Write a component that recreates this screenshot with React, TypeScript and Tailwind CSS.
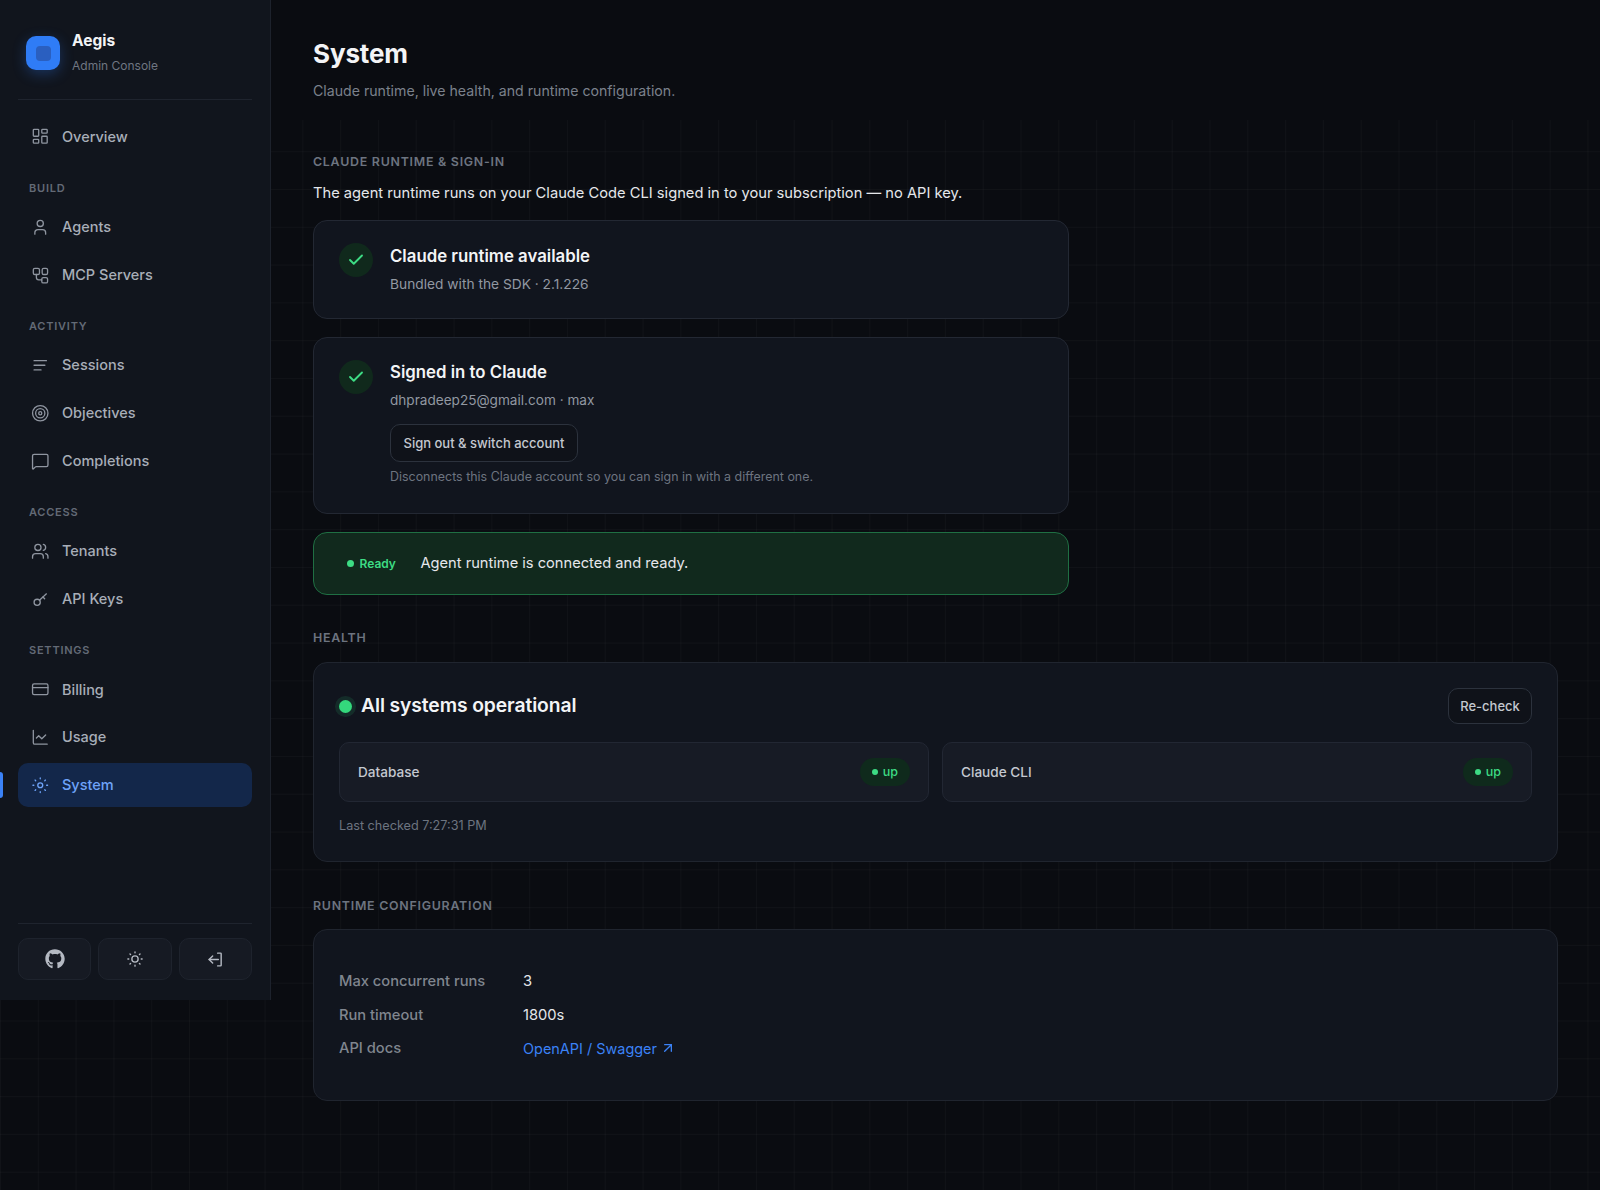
import React from "react";
import {
  LayoutDashboard, User, Target, MessageSquare, Users, CreditCard, ChartLine, Check, ArrowUpRight,
} from "lucide-react";
import { FaGithub } from "react-icons/fa";

function McpIcon({ size = 18.5 }: { size?: number }) {
  return (
    <svg width={size} height={size} viewBox="0 0 24 24" fill="none" stroke="currentColor" strokeWidth="1.7" strokeLinecap="round" strokeLinejoin="round">
      <rect x="3" y="3" width="8" height="8" rx="2" />
      <rect x="14.5" y="3" width="7" height="8" rx="2" />
      <rect x="14" y="15" width="7.5" height="7" rx="2" />
      <path d="M7 11v4a3 3 0 0 0 3 3h4" />
    </svg>
  );
}

function LinesIcon({ size = 18.5 }: { size?: number }) {
  return (
    <svg width={size} height={size} viewBox="0 0 24 24" fill="none" stroke="currentColor" strokeWidth="1.7" strokeLinecap="round">
      <path d="M4 6h16" />
      <path d="M4 12h14" />
      <path d="M4 18h9" />
    </svg>
  );
}

function SmallKeyIcon({ size = 18.5 }: { size?: number }) {
  return (
    <svg width={size} height={size} viewBox="0 0 24 24" fill="none" stroke="currentColor" strokeWidth="1.7" strokeLinecap="round" strokeLinejoin="round">
      <circle cx="8" cy="16" r="4" />
      <path d="M11 13.2 20 5" />
      <path d="M15.5 9l2.2 2.4" />
    </svg>
  );
}

function DotSun({ size = 18.5, r = 3.2, sw = 1.7 }: { size?: number; r?: number; sw?: number }) {
  return (
    <svg width={size} height={size} viewBox="0 0 24 24" fill="none" stroke="currentColor" strokeWidth={sw} strokeLinecap="round">
      <circle cx="12" cy="12" r={r} />
      <path d="M12 2.5v1.2M12 20.3v1.2M2.5 12h1.2M20.3 12h1.2M5.3 5.3l.8.8M17.9 17.9l.8.8M5.3 18.7l.8-.8M17.9 6.1l.8-.8" />
    </svg>
  );
}

function ExitIcon({ size = 17 }: { size?: number }) {
  return (
    <svg width={size} height={size} viewBox="0 0 24 24" fill="none" stroke="currentColor" strokeWidth="2" strokeLinecap="round" strokeLinejoin="round">
      <path d="M15 3h4a1 1 0 0 1 1 1v16a1 1 0 0 1-1 1h-4" />
      <path d="M16 12H3" />
      <path d="M8 7l-5 5 5 5" />
    </svg>
  );
}

type Item = { label: string; icon: React.ReactNode; active?: boolean };
const ic = { size: 18.5, strokeWidth: 1.7 };
const groups: { title?: string; items: Item[] }[] = [
  { items: [{ label: "Overview", icon: <LayoutDashboard {...ic} /> }] },
  { title: "BUILD", items: [{ label: "Agents", icon: <User {...ic} /> }, { label: "MCP Servers", icon: <McpIcon /> }] },
  {
    title: "ACTIVITY",
    items: [
      { label: "Sessions", icon: <LinesIcon /> },
      { label: "Objectives", icon: <Target {...ic} /> },
      { label: "Completions", icon: <MessageSquare {...ic} /> },
    ],
  },
  { title: "ACCESS", items: [{ label: "Tenants", icon: <Users {...ic} /> }, { label: "API Keys", icon: <SmallKeyIcon /> }] },
  {
    title: "SETTINGS",
    items: [
      { label: "Billing", icon: <CreditCard {...ic} /> },
      { label: "Usage", icon: <ChartLine {...ic} /> },
      { label: "System", icon: <DotSun />, active: true },
    ],
  },
];

function NavItem({ item }: { item: Item }) {
  return (
    <div
      className={
        "relative flex h-[44px] items-center gap-[12.5px] rounded-[10px] px-[13px] text-[14.5px] font-medium " +
        (item.active ? "bg-[#13274a] text-[#6ea3f8]" : "text-[#a8aeb8]")
      }
    >
      {item.active && <span className="absolute left-[-18px] top-[9px] h-[26px] w-[3px] rounded-r-[3px] bg-[#3b82f6]" />}
      <span className={item.active ? "text-[#6ea3f8]" : "text-[#8f95a0]"}>{item.icon}</span>
      <span>{item.label}</span>
    </div>
  );
}

function Sidebar() {
  return (
    <aside className="flex h-[1000px] w-[271px] shrink-0 flex-col border-r border-[#1d222c] bg-[#11151d] px-[18px]">
      <div className="flex items-start gap-[12px] pl-[8px] pt-[31px]">
        <div className="mt-[5px] flex h-[34px] w-[34px] items-center justify-center rounded-[10px] bg-[#2f7cf6] shadow-[0_4px_14px_rgba(47,124,246,0.3)]">
          <div className="h-[15px] w-[15px] rounded-[4px] bg-[#2a5fc0]" />
        </div>
        <div>
          <div className="text-[15.5px] font-bold leading-[20px] text-[#f3f4f6]">Aegis</div>
          <div className="mt-[7px] text-[12px] leading-[16px] text-[#6f7682]">Admin Console</div>
        </div>
      </div>
      <div className="mt-[25px] h-px bg-[#1f242e]" />
      <nav className="mt-[14.5px] flex flex-col">
        {groups.map((g, i) => (
          <div key={i} className="flex flex-col">
            {g.title && (
              <div className="pb-[9.5px] pl-[11px] pt-[21px] text-[11px] font-semibold leading-[16px] tracking-[0.07em] text-[#636a76]">
                {g.title}
              </div>
            )}
            <div className="flex flex-col gap-[3.75px]">
              {g.items.map((it) => (
                <NavItem key={it.label} item={it} />
              ))}
            </div>
          </div>
        ))}
      </nav>
      <div className="mt-auto border-t border-[#1f242e] pb-[20px] pt-[14px]">
        <div className="flex gap-[7px]">
          {[<FaGithub size={20} key="g" />, <DotSun size={18} r={4.2} sw={1.8} key="s" />, <ExitIcon key="e" />].map((ico, i) => (
            <button key={i} className="flex h-[42px] flex-1 items-center justify-center rounded-[10px] border border-[#1e232d] bg-[#161a23] text-[#b4b9c2]">
              {ico}
            </button>
          ))}
        </div>
      </div>
    </aside>
  );
}

function SectionLabel({ children, className = "" }: { children: React.ReactNode; className?: string }) {
  return <div className={"text-[12.4px] font-semibold leading-[16px] tracking-[0.06em] text-[#6d7480] " + className}>{children}</div>;
}

function CheckCircle() {
  return (
    <div className="flex h-[34px] w-[34px] shrink-0 items-center justify-center rounded-full bg-[#10291c] text-[#3ddc84]">
      <Check size={18} strokeWidth={2.5} />
    </div>
  );
}

function UpBadge() {
  return (
    <div className="flex h-[28px] items-center gap-[5px] rounded-full bg-[#0f2a1c] px-[12px] text-[12.5px] font-medium text-[#3ddc84]">
      <span className="h-[6px] w-[6px] rounded-full bg-[#3ddc84]" />
      up
    </div>
  );
}

function Row({ label, children }: { label: string; children: React.ReactNode }) {
  return (
    <div className="flex h-[33.5px] items-center text-[14.7px]">
      <div className="w-[184px] font-medium text-[#80868f]">{label}</div>
      <div className="text-[#e5e7eb]">{children}</div>
    </div>
  );
}

export default function App() {
  return (
    <div
      className="flex min-h-[1190px] bg-[#0a0c11] bg-[linear-gradient(#0a0c11,#0a0c11),linear-gradient(rgba(255,255,255,0.028)_1px,transparent_1px),linear-gradient(90deg,rgba(255,255,255,0.028)_1px,transparent_1px)] bg-[size:100%_120px,37.8px_37.8px,37.8px_37.8px] [background-repeat:no-repeat,repeat,repeat]"
      style={{ fontFamily: '"Inter", "Noto Sans", sans-serif' }}
    >
      <Sidebar />
      <main className="flex-1 pl-[42px] pr-[42px] pt-[37.5px]">
        <h1 className="text-[26px] font-bold leading-[32px] tracking-[-0.005em] text-[#f3f4f6]">System</h1>
        <p className="mt-[11px] text-[14.15px] leading-[20px] text-[#7b818c]">Claude runtime, live health, and runtime configuration.</p>

        <SectionLabel className="mt-[53.5px]">CLAUDE RUNTIME &amp; SIGN-IN</SectionLabel>
        <p className="mt-[12px] text-[14.7px] leading-[22px] text-[#e5e7eb]">
          The agent runtime runs on your Claude Code CLI signed in to your subscription — no API key.
        </p>

        <div className="mt-[16px] flex w-[756px] flex-col gap-[18px]">
          <div className="flex h-[99px] gap-[17px] rounded-[14px] border border-[#232833] bg-[#11151e] pl-[25px] pt-[22px]">
            <CheckCircle />
            <div className="pt-[1px]">
              <div className="text-[16.8px] font-semibold leading-[24px] text-[#f3f4f6]">Claude runtime available</div>
              <div className="mt-[6px] text-[13.75px] leading-[20px] text-[#9298a2]">Bundled with the SDK · 2.1.226</div>
            </div>
          </div>

          <div className="flex h-[177px] gap-[17px] rounded-[14px] border border-[#232833] bg-[#11151e] pl-[25px] pt-[22px]">
            <CheckCircle />
            <div>
              <div className="text-[16.8px] font-semibold leading-[24px] text-[#f3f4f6]">Signed in to Claude</div>
              <div className="mt-[6px] text-[13.6px] leading-[20px] text-[#9298a2]">dhpradeep25@gmail.com · max</div>
              <button className="mt-[14px] flex h-[38px] items-center rounded-[10px] border border-[#2c323d] bg-[#0f1219] px-[12.5px] pt-[1px] text-[13px] font-medium text-[#c4c8d0]">
                Sign out &amp; switch account
              </button>
              <div className="mt-[6px] text-[12.45px] leading-[18px] text-[#6d7480]">Disconnects this Claude account so you can sign in with a different one.</div>
            </div>
          </div>

          <div className="flex h-[63px] items-center rounded-[14px] border border-[#1f6f43] bg-[#11291d] pl-[32.5px]">
            <span className="h-[7px] w-[7px] rounded-full bg-[#3ddc84]" />
            <span className="ml-[3px] w-[64px] pl-[3px] text-[12px] font-semibold text-[#3ddc84]">Ready</span>
            <span className="text-[14.65px] text-[#e5e7eb]">Agent runtime is connected and ready.</span>
          </div>
        </div>

        <SectionLabel className="mt-[35px]">HEALTH</SectionLabel>
        <div className="mt-[16px] h-[200px] rounded-[14px] border border-[#20252f] bg-[#11151e] px-[25px] pt-[25px]">
          <div className="flex h-[36px] items-center justify-between">
            <div className="flex items-center gap-[9px] pb-[2px]">
              <span className="mt-[2px] h-[13px] w-[13px] rounded-full bg-[#34d87c] shadow-[0_0_0_4px_rgba(52,216,124,0.12)]" />
              <span className="text-[19.3px] font-semibold tracking-[-0.005em] text-[#f3f4f6]">All systems operational</span>
            </div>
            <button className="flex h-[36px] w-[84px] items-center justify-center rounded-[10px] border border-[#2c323d] bg-[#0f1219] pt-[1px] text-[13px] font-medium text-[#c4c8d0]">
              Re-check
            </button>
          </div>
          <div className="mt-[18px] grid grid-cols-2 gap-[13px]">
            {["Database", "Claude CLI"].map((n) => (
              <div key={n} className="flex h-[60px] items-center justify-between rounded-[10px] border border-[#222733] bg-[#171b25] px-[18px]">
                <span className="text-[13.6px] font-medium text-[#c4c8d0]">{n}</span>
                <UpBadge />
              </div>
            ))}
          </div>
          <div className="mt-[15px] text-[12.65px] leading-[18px] text-[#6d7480]">Last checked 7:27:31 PM</div>
        </div>

        <SectionLabel className="mt-[36px]">RUNTIME CONFIGURATION</SectionLabel>
        <div className="mt-[15px] flex h-[172px] flex-col justify-center rounded-[14px] border border-[#20252f] bg-[#11151e] pl-[25px]">
          <Row label="Max concurrent runs">3</Row>
          <Row label="Run timeout">1800s</Row>
          <Row label="API docs">
            <a className="flex items-center gap-[3px] text-[14.45px] text-[#3b82f6]">
              OpenAPI / Swagger <ArrowUpRight size={16} strokeWidth={2} />
            </a>
          </Row>
        </div>
      </main>
    </div>
  );
}
